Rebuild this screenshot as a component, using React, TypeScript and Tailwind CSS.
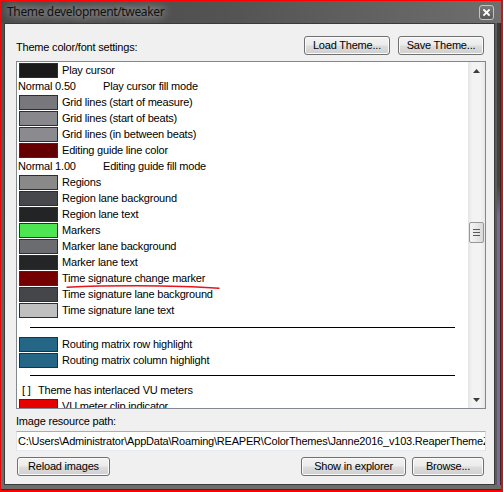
import type { ReactNode } from 'react';
import clsx from 'clsx';

type Row =
  | { kind: 'color'; label: string; color: string }
  | { kind: 'mode'; value: string; label: string }
  | { kind: 'sep'; h: string }
  | { kind: 'check'; label: string };

const rows: Row[] = [
  { kind: 'color', label: 'Play cursor', color: '#1a1a1a' },
  { kind: 'mode', value: 'Normal 0.50', label: 'Play cursor fill mode' },
  { kind: 'color', label: 'Grid lines (start of measure)', color: '#78787c' },
  { kind: 'color', label: 'Grid lines (start of beats)', color: '#88888c' },
  { kind: 'color', label: 'Grid lines (in between beats)', color: '#8b8b8f' },
  { kind: 'color', label: 'Editing guide line color', color: '#640000' },
  { kind: 'mode', value: 'Normal 1.00', label: 'Editing guide fill mode' },
  { kind: 'color', label: 'Regions', color: '#898989' },
  { kind: 'color', label: 'Region lane background', color: '#47484b' },
  { kind: 'color', label: 'Region lane text', color: '#232426' },
  { kind: 'color', label: 'Markers', color: '#4ee552' },
  { kind: 'color', label: 'Marker lane background', color: '#6b6c6f' },
  { kind: 'color', label: 'Marker lane text', color: '#242527' },
  { kind: 'color', label: 'Time signature change marker', color: '#740000' },
  { kind: 'color', label: 'Time signature lane background', color: '#444649' },
  { kind: 'color', label: 'Time signature lane text', color: '#c0c0c0' },
  { kind: 'sep', h: 'h-[18px]' },
  { kind: 'color', label: 'Routing matrix row highlight', color: '#236685' },
  { kind: 'color', label: 'Routing matrix column highlight', color: '#236685' },
  { kind: 'sep', h: 'h-[14px]' },
  { kind: 'check', label: 'Theme has interlaced VU meters' },
  { kind: 'color', label: 'VU meter clip indicator', color: '#e60000' },
  { kind: 'color', label: 'VU meter top', color: '#ff8000' },
  { kind: 'color', label: 'VU meter middle', color: '#ffff00' },
];

const ui = "font-['Liberation_Sans',Arial,sans-serif] text-[11px] tracking-[-0.2px] text-black";

function WinButton({ children, className }: { children: ReactNode; className?: string }) {
  return (
    <button
      type="button"
      className={clsx(
        'flex h-[19px] items-center justify-center rounded-[3px] border border-[#707070] leading-none shadow-[inset_0_0_0_1px_#fbfbfb]',
        'bg-[linear-gradient(to_bottom,#f3f3f3_0%,#ebebeb_48%,#dddddd_52%,#cfcfcf_100%)]',
        className
      )}
    >
      {children}
    </button>
  );
}

function ListRow({ row }: { row: Row }) {
  if (row.kind === 'sep') {
    return (
      <div className={clsx('flex items-center', row.h)}>
        <div className="ml-[13px] h-px w-[425px] bg-black" />
      </div>
    );
  }
  if (row.kind === 'mode') {
    return (
      <div className="flex h-4 items-center pl-px leading-none">
        <span className="w-[85px]">{row.value}</span>
        <span>{row.label}</span>
      </div>
    );
  }
  if (row.kind === 'check') {
    return (
      <div className="flex h-4 items-center pl-[5px] leading-none">
        <span className="w-4">[ ]</span>
        <span>{row.label}</span>
      </div>
    );
  }
  return (
    <div className="flex h-4 items-center gap-1 pl-[2px] leading-none">
      <div className="h-[15px] w-[39px] border border-[#2e2e2e]" style={{ backgroundColor: row.color }} />
      <span>{row.label}</span>
    </div>
  );
}

function ScrollBar() {
  return (
    <div className="flex w-[17px] flex-col bg-[linear-gradient(to_right,#e4e4e4,#f3f3f3_25%,#f3f3f3_75%,#e8e8e8)]">
      <div className="flex h-[17px] items-center justify-center">
        <svg width="7" height="4" viewBox="0 0 7 4">
          <path d="M3.5 0 L7 4 L0 4 Z" fill="#3c3c3c" />
        </svg>
      </div>
      <div className="flex-1">
        <div className="mx-px mt-[143px] flex h-[21px] flex-col items-center justify-center gap-[2px] rounded-[2px] border border-[#979797] bg-[linear-gradient(to_right,#f4f4f4,#e9e9e9_50%,#d9d9d9)]">
          <div className="h-px w-[7px] bg-[#5a5a5a]" />
          <div className="h-px w-[7px] bg-[#5a5a5a]" />
          <div className="h-px w-[7px] bg-[#5a5a5a]" />
        </div>
      </div>
      <div className="flex h-[17px] items-center justify-center">
        <svg width="7" height="4" viewBox="0 0 7 4">
          <path d="M0 0 L7 0 L3.5 4 Z" fill="#3c3c3c" />
        </svg>
      </div>
    </div>
  );
}

export default function App() {
  return (
    <div className="h-[492px] w-[503px] bg-[#ff0000] pb-[2px] pl-px pr-[2px] pt-px">
      <div className="flex h-full flex-col bg-[linear-gradient(to_bottom,#4f4f4f,#6d6d6d)]">
        {/* title bar */}
        <div className="flex h-[22px] items-center bg-[linear-gradient(to_right,#4a4a4a,#535353_45%,#6e6e6e)]">
          <span className="pl-[6px] font-['Segoe_UI','Noto_Sans',sans-serif] text-[12px] tracking-[-0.35px] text-[#111] [text-shadow:0_0_8px_rgba(255,255,255,0.75),0_0_14px_rgba(255,255,255,0.45)]">
            Theme development/tweaker
          </span>
          <div className="ml-auto mr-[7px] flex h-[15px] w-[15px] items-center justify-center rounded-[3px] border border-[#c4c4c4] bg-[linear-gradient(to_bottom,#7a7a7a,#585858)]">
            <svg width="7" height="7" viewBox="0 0 7 7">
              <path d="M1 1 L6 6 M6 1 L1 6" stroke="#ffffff" strokeWidth="1.8" strokeLinecap="square" />
            </svg>
          </div>
        </div>

        <div className="flex flex-1 pl-[3px]">
          {/* client area */}
          <div className={clsx('flex w-[491px] flex-col border border-[#3a3a3a] bg-[#f0f0f0] pl-[11px]', ui)}>
            <div className="mt-[12px] flex h-[19px] w-[468px] items-center justify-between">
              <span className="pt-[3px] leading-none">Theme color/font settings:</span>
              <div className="flex gap-2">
                <WinButton className="w-[86px]">Load Theme...</WinButton>
                <WinButton className="w-[86px]">Save Theme...</WinButton>
              </div>
            </div>

            {/* theme item list */}
            <div className="mt-[6px] flex h-[348px] w-[470px] border border-[#828790] bg-white">
              <div className="relative flex-1 overflow-hidden">
                {rows.map((row, i) => (
                  <ListRow key={i} row={row} />
                ))}
                <svg className="absolute left-[43px] top-[219px]" width="165" height="12" viewBox="0 0 165 12">
                  <path d="M7 6.2 C 40 4.6, 110 3.6, 159 7.3" fill="none" stroke="#e8141b" strokeWidth="1.4" strokeLinecap="round" />
                </svg>
              </div>
              <ScrollBar />
            </div>

            <div className="mt-[5px] h-[14px] leading-[14px]">Image resource path:</div>
            <div className="mt-[3px] flex h-[20px] w-[470px] items-center overflow-hidden whitespace-nowrap border border-[#abadb3] border-b-[#e3e9ef] border-l-[#e2e3ea] border-r-[#dbdfe6] bg-white pl-px leading-none">
              {'C:\\Users\\Administrator\\AppData\\Roaming\\REAPER\\ColorThemes\\Janne2016_v103.ReaperThemeZip'}
            </div>

            <div className="mt-[6px] flex w-[468px] pl-px">
              <WinButton className="w-[93px]">Reload images</WinButton>
              <div className="ml-auto flex gap-[6px]">
                <WinButton className="w-[105px]">Show in explorer</WinButton>
                <WinButton className="w-[72px]">Browse...</WinButton>
              </div>
            </div>
          </div>

          {/* right edge of the frame */}
          <div className="w-[6px] border-l-2 border-r border-l-[#5c5c5c] border-r-[#2c2c2c] bg-[linear-gradient(to_bottom,#3b3b33,#45443b_35%,#786a98_42%,#7a6c9a)]" />
        </div>
        <div className="h-[5px] border-b border-b-[#2e2e2e]" />
      </div>
    </div>
  );
}
